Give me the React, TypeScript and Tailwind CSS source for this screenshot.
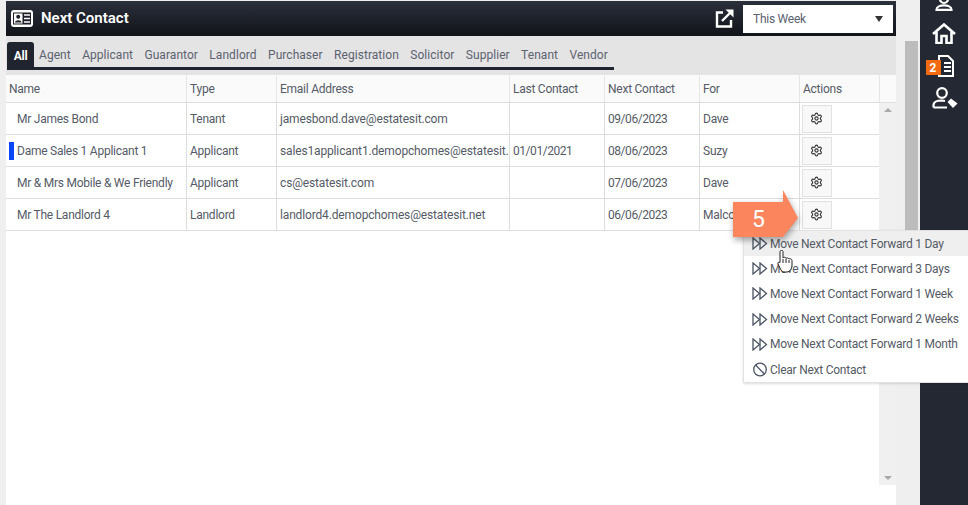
import React from "react";
import { Settings } from "lucide-react";

const cols = ["w-[181px]", "w-[90px]", "w-[233px]", "w-[95px]", "w-[95px]", "w-[100px]", "w-[80px]"];
const headers = ["Name", "Type", "Email Address", "Last Contact", "Next Contact", "For", "Actions"];
const rows = [
  ["Mr James Bond", "Tenant", "jamesbond.dave@estatesit.com", "", "09/06/2023", "Dave"],
  ["Dame Sales 1 Applicant 1", "Applicant", "sales1applicant1.demopchomes@estatesit.net", "01/01/2021", "08/06/2023", "Suzy"],
  ["Mr & Mrs Mobile & We Friendly", "Applicant", "cs@estatesit.com", "", "07/06/2023", "Dave"],
  ["Mr The Landlord 4", "Landlord", "landlord4.demopchomes@estatesit.net", "", "06/06/2023", "Malcolm"],
];
const tabs = ["Agent", "Applicant", "Guarantor", "Landlord", "Purchaser", "Registration", "Solicitor", "Supplier", "Tenant", "Vendor"];
const menu = ["Move Next Contact Forward 1 Day", "Move Next Contact Forward 3 Days", "Move Next Contact Forward 1 Week", "Move Next Contact Forward 2 Weeks", "Move Next Contact Forward 1 Month"];

const cellTracking = ["", "", "tracking-[-0.15px]", "tracking-[-0.45px]", "tracking-[-0.45px]", ""];

function FF() {
  return (
    <svg width="16" height="13" viewBox="0 0 16 13" fill="none" stroke="#4b5563" strokeWidth="1.3" className="shrink-0">
      <path d="M1 1 L7.5 6.5 L1 12 Z" />
      <path d="M8 1 L14.5 6.5 L8 12 Z" />
    </svg>
  );
}

export default function App() {
  return (
    <div className="relative flex h-[505px] w-[968px] overflow-hidden bg-[#efefef] font-['Roboto',sans-serif] text-[12px] tracking-[-0.25px] text-[#555b66]">
      <main className="ml-[6px] flex w-[890px] shrink-0 flex-col pt-px">
        <header className="flex h-[35px] shrink-0 items-center bg-gradient-to-b from-[#2b303b] to-[#12141a] pl-[5px] pr-[3px]">
          <svg width="22" height="17" viewBox="0 0 22 17" className="shrink-0">
            <rect x="0" y="0" width="22" height="17" rx="3" fill="#fff" />
            <rect x="2" y="2.5" width="18" height="12" fill="#1d2028" />
            <rect x="3" y="3.5" width="8.5" height="10" fill="#fff" />
            <circle cx="7.2" cy="6.7" r="2" fill="#1d2028" />
            <path d="M4 12.5 C4 9.5 10.5 9.5 10.5 12.5 Z" fill="#1d2028" />
            <path d="M13 5 H19 M13 8.5 H19 M13 12 H19" stroke="#fff" strokeWidth="1.6" />
          </svg>
          <span className="ml-[8px] text-[15px] font-semibold tracking-normal text-white">Next Contact</span>
          <svg width="21" height="21" viewBox="0 0 21 21" fill="none" className="ml-auto mr-[8px] shrink-0">
            <path d="M9 4.5 H3 V18.5 H17 V12" stroke="#fff" strokeWidth="2.4" />
            <path d="M8 13 L17 4" stroke="#fff" strokeWidth="2.4" />
            <path d="M11.5 1.5 H19.5 V9.5 Z" fill="#fff" />
          </svg>
          <div className="flex h-[28px] w-[150px] items-center justify-between bg-white pl-[10px] pr-[10px] text-[#5c6270]">
            <span>This Week</span>
            <span className="h-0 w-0 border-x-[4px] border-t-[6px] border-x-transparent border-t-[#333]" />
          </div>
        </header>
        <div className="h-[39px] shrink-0 bg-[#e4e4e4] pl-px pt-[6px]">
          <div className="flex h-[28px] w-[607px] items-center border-b-[3px] border-[#20242e] text-[#5c6270]">
            <span className="-mb-[3px] flex h-[28px] w-[27px] shrink-0 items-center justify-center rounded-[3px] bg-[#20242e] font-bold text-white">All</span>
            <div className="ml-[5px] flex gap-[11.4px] tracking-[0.05px]">
              {tabs.map((t) => (
                <span key={t}>{t}</span>
              ))}
            </div>
          </div>
        </div>
        <div className="flex-1 bg-white">
          <div className="flex h-[28px] border-b border-[#dedede] bg-[#fafafa]">
            {headers.map((h, i) => (
              <div key={h} className={`${cols[i]} flex shrink-0 items-center border-r border-[#e6e6e6] pl-[3px]`}>
                {h}
              </div>
            ))}
          </div>
          <div>
            {rows.map((r, ri) => (
              <div key={r[0]} className="flex h-[32px] border-b border-[#dedede]">
                {r.map((c, i) => (
                  <div key={i} className={`${cols[i]} ${cellTracking[i]} flex shrink-0 items-center overflow-hidden whitespace-nowrap border-r border-[#dedede] pl-[3px]`}>
                    {i === 0 && <span className={`mr-[3px] h-[18px] w-[5px] shrink-0 ${ri === 1 ? "bg-[#0a46f5]" : ""}`} />}
                    {c}
                  </div>
                ))}
                <div className="flex w-[80px] shrink-0 items-center pl-[2px]">
                  <span className="flex h-[28px] w-[30px] items-center justify-center border border-[#e2e2e2] bg-[#f8f8f8] pr-px">
                    <Settings size={13} strokeWidth={2} color="#333" />
                  </span>
                </div>
              </div>
            ))}
          </div>
        </div>
      </main>
      <div className="ml-[9px] mt-[41px] h-[232px] w-[13px] shrink-0 bg-[#bcbcbc]" />
      <aside className="ml-[2px] flex flex-1 flex-col items-center bg-[#232833] text-white">
        <svg width="18" height="11" viewBox="0 0 18 11" fill="none" stroke="#fff" strokeWidth="2.2">
          <circle cx="9" cy="-1" r="4" />
          <path d="M1.5 9.8 C1.5 4 16.5 4 16.5 9.8 Z" />
        </svg>
        <svg width="24" height="21" viewBox="0 0 24 21" fill="none" stroke="#fff" strokeWidth="2.6" className="mt-[12px]">
          <path d="M1 11 L12 1.5 L23 11" />
          <path d="M4.5 9 V20 H9.5 V13 H14.5 V20 H19.5 V9" />
        </svg>
        <div className="relative ml-[-1px] mt-[11px] h-[22px] w-[16px]">
          <svg width="16" height="22" viewBox="0 0 16 22" fill="none" stroke="#fff" strokeWidth="2" className="absolute left-[2px] top-0">
            <path d="M1 1 H10 L15 6 V21 H1 Z" />
            <path d="M6 8 H13 M6 12 H13 M6 16 H13" />
          </svg>
          <span className="absolute left-[-10px] top-[5px] flex h-[15px] w-[15px] items-center justify-center bg-[#f26a10] text-[12px] font-bold tracking-normal text-white">2</span>
        </div>
        <svg width="26" height="22" viewBox="0 0 26 22" fill="none" stroke="#fff" strokeWidth="2.2" className="ml-[2px] mt-[10px]">
          <circle cx="10" cy="6" r="4.8" />
          <path d="M1.5 20.5 V18 C1.5 14.5 6 13.5 10 13.5 L13 14 M1.5 20.5 H15" />
          <path d="M15.5 15 L19 11.5 L25.5 16.5 L21 21 Z" fill="#fff" stroke="none" />
        </svg>
      </aside>

      {/* table scroll arrows */}
      <div className="absolute left-[879px] top-[103px] flex h-[382px] w-[17px] flex-col items-center justify-between bg-[#f0f0f0] py-[5px]">
        <span className="h-0 w-0 border-x-[4px] border-b-[4px] border-x-transparent border-b-[#a8a8a8]" />
        <span className="h-0 w-0 border-x-[4px] border-t-[4px] border-x-transparent border-t-[#a8a8a8]" />
      </div>

      {/* dropdown */}
      <div className="absolute left-[743px] top-[230px] w-[232px] border border-[#e2e2e2] bg-white shadow-sm">
        {menu.map((m, i) => (
          <div key={m} className={`flex h-[25.2px] items-center gap-[2px] pl-[8px] ${i === 0 ? "bg-[#efefef]" : ""}`}>
            <FF />
            <span className="whitespace-nowrap">{m}</span>
          </div>
        ))}
        <div className="flex h-[25.2px] items-center gap-[2px] pl-[8px]">
          <svg width="16" height="15" viewBox="0 0 16 15" fill="none" stroke="#4b5563" strokeWidth="1.3" className="shrink-0">
            <circle cx="8" cy="7.5" r="6.3" />
            <path d="M3.6 3 L12.4 12" />
          </svg>
          <span>Clear Next Contact</span>
        </div>
      </div>

      {/* callout arrow */}
      <svg width="70" height="66" viewBox="0 0 70 66" className="absolute left-[733px] top-[190px] drop-shadow-[1px_3px_3px_rgba(0,0,0,0.35)]">
        <path d="M0 12 H50 V0 L65 28 L50 47 H0 Z" fill="#fb855c" />
      </svg>
      <span className="absolute left-[752px] top-[206px] text-[23px] leading-[28px] tracking-normal text-white">5</span>

      {/* hand cursor */}
      <svg width="16" height="23" viewBox="0 0 16 23" className="absolute left-[777px] top-[250px]">
        <path d="M3 1.5 C3 0 6 0 6 1.5 V8 C6.5 6.8 9 7 9 8.5 C9.5 7.5 11.5 7.7 12 9 C12.5 8.3 15 8.8 15 10.5 V15 C15 18 13 22 10 22 H7 C5 22 4 20 3 18 L1 14 C0.3 12.5 2 11.5 3 12.5 Z" fill="#fff" stroke="#222" strokeWidth="1" />
        <path d="M6 9 V13 M9 9 V13 M12 10 V13" stroke="#222" strokeWidth="1" fill="none" />
      </svg>
    </div>
  );
}
